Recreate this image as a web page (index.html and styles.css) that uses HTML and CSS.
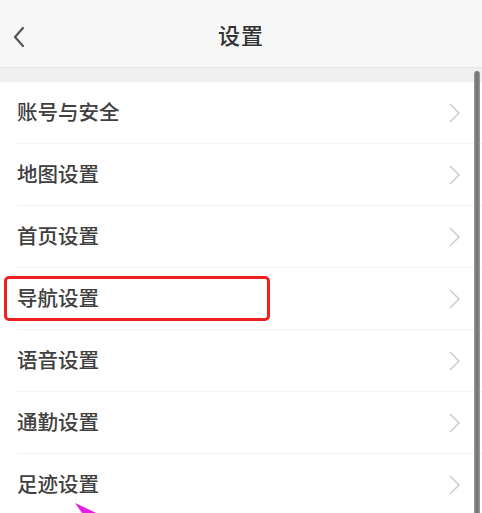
FILE: index.html
```html
<!DOCTYPE html>
<html lang="zh-CN">
<head>
<meta charset="utf-8">
<title>设置</title>
<link rel="stylesheet" href="styles.css">
</head>
<body>
<div class="screen">
  <header class="topbar">
    <svg class="back" width="14" height="22" viewBox="0 0 14 22"><path d="M11 2 L3 11 L11 20" fill="none" stroke="#555" stroke-width="2.2" stroke-linecap="round" stroke-linejoin="round"/></svg>
    <h1 class="title">设置</h1>
  </header>
  <div class="band"></div>
  <ul class="list">
    <li class="row"><span class="label">账号与安全</span><svg class="chev" width="14" height="22" viewBox="0 0 14 22"><path d="M2 2 L11 11 L2 20" fill="none" stroke="#cccccc" stroke-width="1.5"/></svg></li>
    <li class="row"><span class="label">地图设置</span><svg class="chev" width="14" height="22" viewBox="0 0 14 22"><path d="M2 2 L11 11 L2 20" fill="none" stroke="#cccccc" stroke-width="1.5"/></svg></li>
    <li class="row"><span class="label">首页设置</span><svg class="chev" width="14" height="22" viewBox="0 0 14 22"><path d="M2 2 L11 11 L2 20" fill="none" stroke="#cccccc" stroke-width="1.5"/></svg></li>
    <li class="row"><span class="label">导航设置</span><svg class="chev" width="14" height="22" viewBox="0 0 14 22"><path d="M2 2 L11 11 L2 20" fill="none" stroke="#cccccc" stroke-width="1.5"/></svg></li>
    <li class="row"><span class="label">语音设置</span><svg class="chev" width="14" height="22" viewBox="0 0 14 22"><path d="M2 2 L11 11 L2 20" fill="none" stroke="#cccccc" stroke-width="1.5"/></svg></li>
    <li class="row"><span class="label">通勤设置</span><svg class="chev" width="14" height="22" viewBox="0 0 14 22"><path d="M2 2 L11 11 L2 20" fill="none" stroke="#cccccc" stroke-width="1.5"/></svg></li>
    <li class="row"><span class="label">足迹设置</span><svg class="chev" width="14" height="22" viewBox="0 0 14 22"><path d="M2 2 L11 11 L2 20" fill="none" stroke="#cccccc" stroke-width="1.5"/></svg></li>
  </ul>
  <div class="highlight"></div>
  <div class="scrollbar"></div>
  <svg class="pointer" width="40" height="20" viewBox="0 0 40 20"><polygon points="0,0 30,14 14,20" fill="#e61ee6"/></svg>
</div>
</body>
</html>
```
FILE: styles.css
```css
* { box-sizing: border-box; }
html, body { margin: 0; padding: 0; }
body {
  background: #ffffff;
  font-family: "Noto Sans CJK SC", "Noto Sans", sans-serif;
  color: #3a3a3a;
}
.screen {
  position: relative;
  width: 482px;
  height: 513px;
  overflow: hidden;
  background: #ffffff;
}
.topbar {
  height: 67px;
  background: #f7f7f7;
  display: flex;
  align-items: center;
  justify-content: center;
  position: relative;
}
.back {
  position: absolute;
  left: 12px;
  top: 26px;
}
.title {
  margin: 0;
  font-size: 22px;
  font-weight: 500;
  color: #333;
  letter-spacing: 1px;
}
.band {
  height: 15px;
  background: #efefef;
  border-top: 1px solid #e8e8e8;
}
.list {
  list-style: none;
  margin: 0;
  padding: 0;
}
.row {
  height: 62px;
  margin-left: 17px;
  padding-right: 20px;
  display: flex;
  align-items: center;
  justify-content: space-between;
  border-bottom: 1px solid #f2f2f2;
}
.label {
  font-size: 20.5px;
  font-weight: 500;
  color: #404040;
  line-height: 1;
  padding-bottom: 2px;
}
.chev { display: block; }
.highlight {
  position: absolute;
  left: 4px;
  top: 276px;
  width: 266px;
  height: 45px;
  border: 3px solid #f0201f;
  border-radius: 5px;
}
.scrollbar {
  position: absolute;
  right: 2px;
  top: 71px;
  width: 6px;
  height: 450px;
  border-radius: 3px 3px 0 0;
  background: linear-gradient(to right, #9a9a9a, #6e6e6e, #9a9a9a);
}
.pointer {
  position: absolute;
  left: 75px;
  top: 503px;
}
```
